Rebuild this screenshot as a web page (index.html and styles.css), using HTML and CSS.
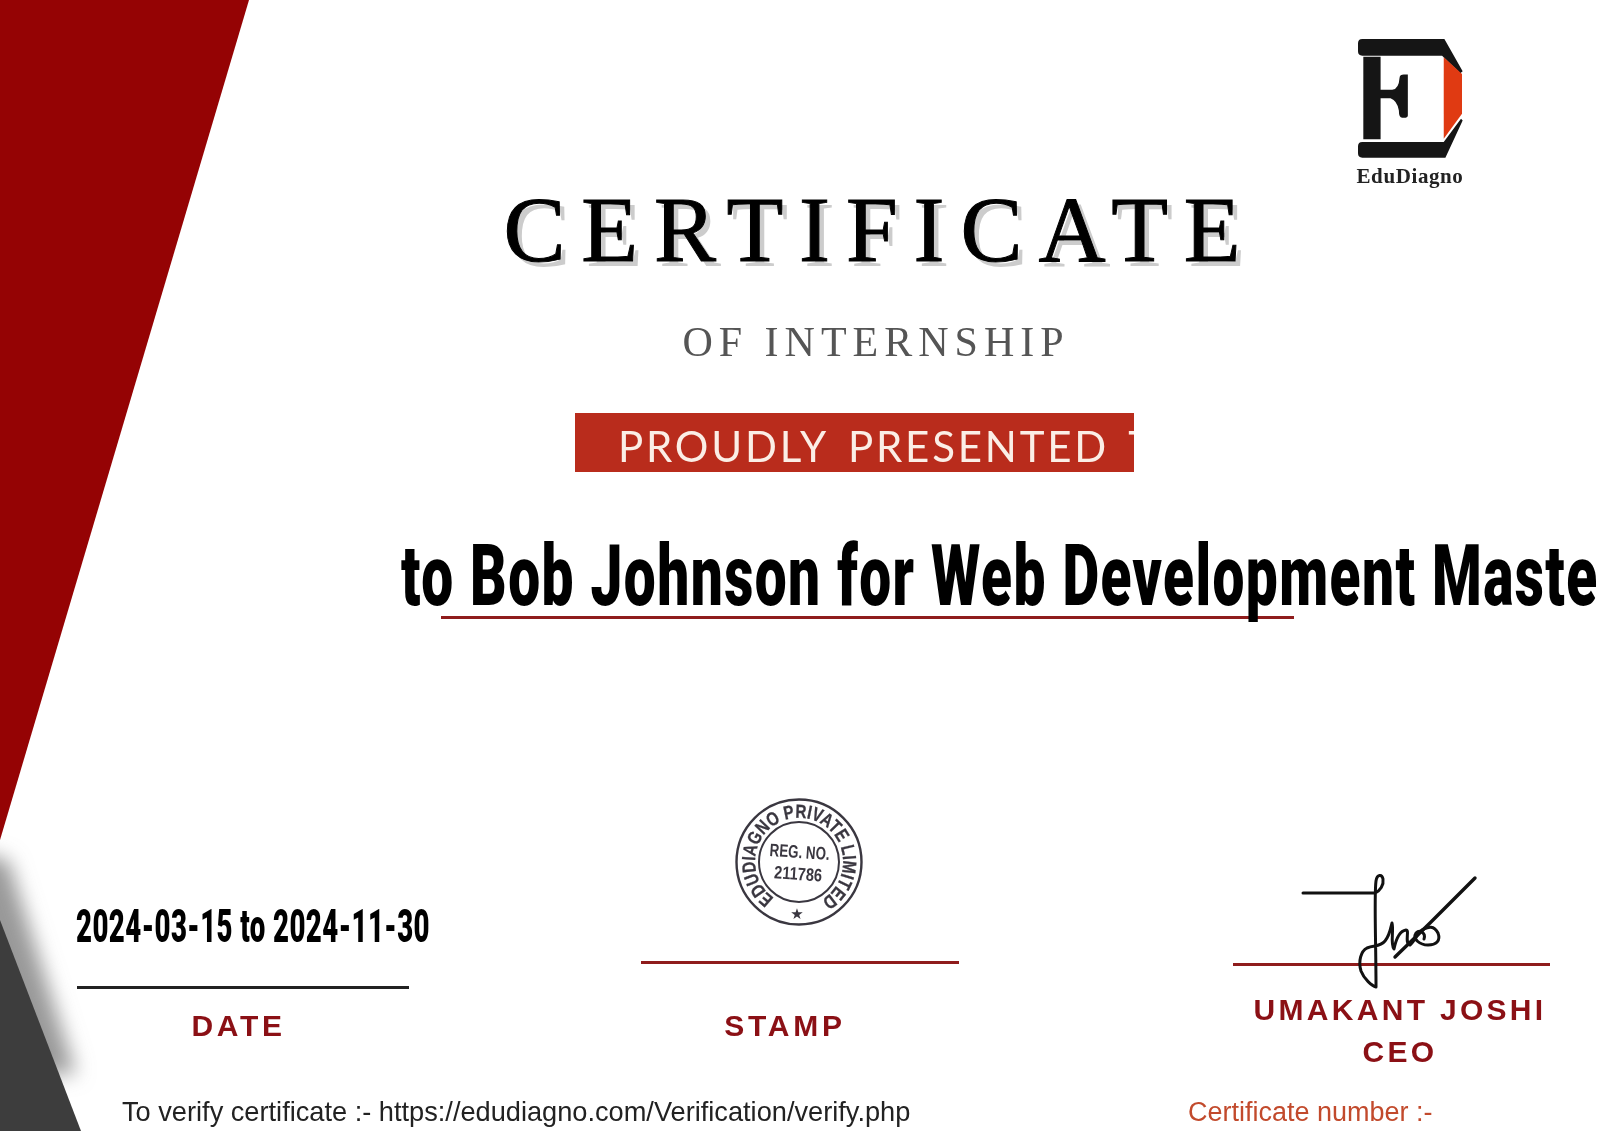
FILE: index.html
```html
<!DOCTYPE html>
<html lang="en">
<head>
    <meta charset="UTF-8">
    <title>Certificate of Internship</title>
    <link rel="stylesheet" href="styles.css">
</head>
<body>
    <div class="certificate">
        <svg class="backdrop" viewBox="0 0 1600 1131" width="1600" height="1131">
            <defs>
                <filter id="soft" x="-50%" y="-50%" width="200%" height="200%">
                    <feGaussianBlur stdDeviation="10"/>
                </filter>
            </defs>
            <polygon points="-40,850 8,860 76,1074 -40,1074" fill="#999" filter="url(#soft)"/>
            <polygon points="0,0 249,0 0,840" fill="#950304"/>
            <polygon points="0,920 81,1131 0,1131" fill="#3d3d3d"/>
        </svg>

        <div class="brand">
            <svg class="brand-mark" viewBox="172 55 316 358" width="105" height="119">
                <path fill="#151515" d="M185 55H432L487 152L480 158L425 105H185Q172 105 172 92V68Q172 55 185 55Z"/>
                <path fill="#151515" d="M185 412H435L487 300L482 295L430 365H185Q172 365 172 378V399Q172 412 185 412Z"/>
                <path fill="#e03a12" d="M430 110L485 160V280L430 355Z"/>
                <path fill="#151515" d="M188 108H240V208H275Q295 205 297 172Q298 162 310 162H322V285Q322 292 310 292H305Q295 292 295 270Q290 240 270 233H240V357H188Z"/>
            </svg>
            <div class="brand-name">EduDiagno</div>
        </div>

        <div class="heading">
            <h1 class="title">CERTIFICATE</h1>
            <div class="subtitle">OF INTERNSHIP</div>
            <div class="banner"><span>PROUDLY PRESENTED TO</span></div>
        </div>

        <div class="recipient"><span>to Bob Johnson for Web Development Master</span></div>
        <div class="recipient-line"></div>

        <div class="signoff">
            <div class="col-date">
                <div class="dates"><span>2024-03-15 to 2024-11-30</span></div>
                <div class="rule rule-dark"></div>
                <div class="label">DATE</div>
            </div>
            <div class="col-stamp">
                <svg class="stamp" viewBox="0 0 130 130" width="130" height="130">
                    <defs>
                        <path id="ring" d="M40 101A44 44 0 1 1 87 103"/>
                    </defs>
                    <circle cx="65" cy="65" r="62.5" fill="none" stroke="#3a3740" stroke-width="2.4"/>
                    <circle cx="65" cy="65" r="40" fill="none" stroke="#3a3740" stroke-width="2"/>
                    <text class="stamp-ring" textLength="226" lengthAdjust="spacingAndGlyphs"><textPath href="#ring">EDUDIAGNO PRIVATE LIMITED</textPath></text>
                    <g transform="rotate(4 65 65)">
                        <text class="stamp-reg" x="65" y="61" text-anchor="middle" textLength="60" lengthAdjust="spacingAndGlyphs">REG. NO.</text>
                        <text class="stamp-reg" x="65" y="83" text-anchor="middle" textLength="48" lengthAdjust="spacingAndGlyphs">211786</text>
                    </g>
                    <text class="stamp-star" x="63" y="122" text-anchor="middle">★</text>
                </svg>
                <div class="rule"></div>
                <div class="label">STAMP</div>
            </div>
            <div class="col-sign">
                <div class="rule"></div>
                <svg class="signature" viewBox="0 0 340 230" width="340" height="230">
                    <g fill="none" stroke="#111" stroke-linecap="round" stroke-linejoin="round" stroke-width="3">
                        <path d="M83 42H155C160 40 164 34 163 28C162 23 157 23 156 30C154 45 156 90 156 136C152 135 144 128 141 120C138 110 141 100 147 97C155 94 160 96 165 90C170 84 171 75 172 72C174 80 170 92 174 98C176 88 180 80 186 79C190 79 184 92 190 94C195 90 198 80 204 78C208 76 214 74 218 82C221 90 216 94 208 94C200 94 192 88 196 82C200 78 206 82 204 88"/>
                        <path d="M175 106L210 72L255 27" stroke-width="3.4"/>
                    </g>
                </svg>
                <div class="signer">UMAKANT JOSHI</div>
                <div class="signer">CEO</div>
            </div>
        </div>

        <div class="verify">
            <div class="verify-link">To verify certificate :- https://edudiagno.com/Verification/verify.php</div>
            <div class="cert-number">Certificate number :-</div>
        </div>
    </div>
</body>
</html>
```

FILE: styles.css
```css
* {
    box-sizing: border-box;
}
body {
    margin: 0;
    background: #fff;
    font-family: "Liberation Sans", Arial, sans-serif;
}
.certificate {
    position: relative;
    width: 1600px;
    height: 1131px;
    overflow: hidden;
    background: #fff;
    display: flex;
    flex-direction: column;
}
.backdrop {
    position: absolute;
    top: 0;
    left: 0;
}
.brand {
    position: relative;
    align-self: flex-end;
    width: 110px;
    margin: 39px 135px 0 0;
    height: 141px;
    text-align: center;
}
.brand-mark {
    display: block;
    margin-left: 3px;
}
.brand-name {
    margin: 6px -5px 0;
    font: bold 21px/24px "Liberation Serif", serif;
    letter-spacing: 0.6px;
    color: #222;
    white-space: nowrap;
}
.heading {
    position: relative;
    width: 800px;
    margin-left: 476px;
    text-align: center;
}
.title {
    margin: 0;
    padding-left: 8px;
    font: normal 93px/100px "Liberation Serif", serif;
    letter-spacing: 15.9px;
    color: #000;
    -webkit-text-stroke: 1px #000;
    text-shadow: 5px 5px 0 #ccc;
    white-space: nowrap;
}
.subtitle {
    margin-top: 37px;
    font: normal 42px/50px "Liberation Serif", serif;
    letter-spacing: 6px;
    color: #555;
}
.banner {
    width: 559px;
    height: 59px;
    margin: 46px 0 0 99px;
    padding-left: 43px;
    background: #b92c1c;
    color: #fbeee6;
    font: normal 42px/66px Lato, sans-serif;
    letter-spacing: 2.8px;
    word-spacing: 7px;
    text-align: left;
    white-space: nowrap;
    overflow: hidden;
}
.recipient {
    position: relative;
    margin: 54px 0 0 401px;
    height: 100px;
    font: 900 86px/100px Roboto, sans-serif;
    letter-spacing: 2.2px;
    color: #000;
    white-space: nowrap;
}
.recipient span {
    display: inline-block;
    transform: scaleX(0.66);
    transform-origin: left center;
}
.recipient-line {
    position: relative;
    width: 853px;
    height: 3px;
    margin: -10px 0 0 441px;
    background: #8f1c1c;
    mix-blend-mode: multiply;
}
.signoff {
    position: relative;
    display: grid;
    grid-template-columns: 565px 592px 1fr;
    padding-left: 76px;
    margin-top: 180px;
    flex: 1;
}
.rule {
    height: 3px;
    background: #8f1c1c;
}
.rule-dark {
    background: #222;
}
.label,
.signer {
    font-weight: bold;
    font-size: 30px;
    line-height: 36px;
    letter-spacing: 3.7px;
    color: #8b1015;
    text-align: center;
}
.col-date {
    padding-top: 102px;
}
.dates {
    height: 50px;
    font: 900 46px/50px Roboto, sans-serif;
    letter-spacing: 0.7px;
    color: #000;
    white-space: nowrap;
}
.dates span {
    display: inline-block;
    transform: scaleX(0.6);
    transform-origin: left center;
}
.col-date .rule {
    width: 332px;
    margin: 35px 0 19px 1px;
}
.col-date .label {
    width: 325px;
}
.col-stamp {
    width: 318px;
    margin-top: -2px;
}
.stamp {
    display: block;
    margin-left: 93px;
}
.stamp-ring {
    font: bold 19px "Liberation Sans Narrow", "Liberation Sans", sans-serif;
    fill: #3a3740;
    stroke: #3a3740;
    stroke-width: 0.3px;
}
.stamp-reg {
    font: bold 18px "Liberation Sans Narrow", "Liberation Sans", sans-serif;
    fill: #3a3740;
}
.stamp-star {
    font: 15px "DejaVu Sans", sans-serif;
    fill: #3a3740;
}
.col-stamp .rule {
    margin-top: 34px;
}
.col-stamp .label {
    width: 288px;
    margin-top: 44px;
}
.col-sign {
    position: relative;
    width: 317px;
    padding-top: 164px;
}
.signature {
    position: absolute;
    top: 52px;
    left: -13px;
}
.col-sign .rule + .signature + .signer {
    margin-top: 23px;
}
.signer {
    margin-left: 17px;
    white-space: nowrap;
    line-height: 42px;
    letter-spacing: 3.3px;
}
.verify {
    position: absolute;
    left: 122px;
    top: 1096px;
    display: grid;
    grid-template-columns: 1066px auto;
    font-size: 27px;
    line-height: 32px;
    color: #222;
    white-space: nowrap;
}
.verify-link {
    font-size: 27.2px;
}
.cert-number {
    color: #c24a2c;
}
```
